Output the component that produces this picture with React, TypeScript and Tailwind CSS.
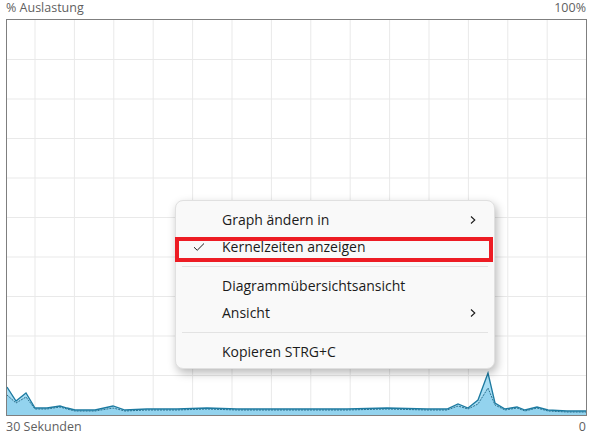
import React from "react";

const W = 579;
const H = 395;

const total: [number, number][] = [
  [0, 367], [9, 381], [19, 373], [28, 388], [40, 388], [53, 386], [60, 388], [68, 390],
  [88, 390], [106, 386], [118, 390], [140, 389], [170, 389], [200, 388], [230, 389],
  [260, 389], [300, 389], [340, 389], [380, 388], [420, 389], [440, 389], [451, 384],
  [461, 388], [471, 380], [481, 353], [488, 383], [498, 389], [510, 387], [518, 390],
  [530, 387], [541, 390], [560, 391], [579, 391],
];

const kernel: [number, number][] = [
  [0, 375], [9, 383], [19, 377], [28, 389], [40, 389], [53, 387], [60, 389], [68, 391],
  [88, 391], [106, 388], [118, 391], [140, 390], [170, 390], [200, 389], [230, 390],
  [260, 390], [300, 390], [340, 390], [380, 389], [420, 390], [440, 390], [451, 386],
  [461, 389], [471, 384], [481, 368], [488, 385], [498, 390], [510, 388], [518, 391],
  [530, 388], [541, 391], [560, 392], [579, 392],
];

const toLine = (pts: [number, number][]) => pts.map((p, i) => `${i ? "L" : "M"}${p[0]} ${p[1]}`).join(" ");
const toArea = (pts: [number, number][]) => `${toLine(pts)} L${W} ${H} L0 ${H} Z`;

function Chart() {
  const vlines: number[] = [];
  for (let x = 28; x < W; x += 39.4) vlines.push(x);
  const hlines: number[] = [];
  for (let i = 1; i < 10; i++) hlines.push(i * 39.5);
  return (
    <svg width={W} height={H} viewBox={`0 0 ${W} ${H}`} className="block">
      {vlines.map((x) => (
        <line key={`v${x}`} x1={x} y1={0} x2={x} y2={H} stroke="#e9e9e9" strokeWidth={1} />
      ))}
      {hlines.map((y) => (
        <line key={`h${y}`} x1={0} y1={y} x2={W} y2={y} stroke="#e9e9e9" strokeWidth={1} />
      ))}
      <path d={toArea(total)} fill="#a9def4" />
      <path d={toArea(kernel)} fill="#93d3ee" />
      <path d={toLine(kernel)} fill="none" stroke="#2a6f8c" strokeWidth={1} strokeDasharray="2 1" />
      <path d={toLine(total)} fill="none" stroke="#1d7aa0" strokeWidth={1.3} />
    </svg>
  );
}

function Chevron() {
  return (
    <svg width="8" height="10" viewBox="0 0 8 10" className="block">
      <path d="M2 1.5 L5.8 5 L2 8.5" fill="none" stroke="#1b1b1b" strokeWidth="1.1" />
    </svg>
  );
}

function Check() {
  return (
    <svg width="12" height="10" viewBox="0 0 12 10" className="block">
      <path d="M1 5.2 L4.2 8.3 L11 1.5" fill="none" stroke="#1b1b1b" strokeWidth="1" />
    </svg>
  );
}

function Item({ label, check, sub }: { label: string; check?: boolean; sub?: boolean }) {
  return (
    <div className="flex h-[27px] items-center">
      <div className="flex w-[46px] shrink-0 items-center pl-[17px]">{check ? <Check /> : null}</div>
      <div className="flex-1 text-[14px] leading-none text-[#1b1b1b]">{label}</div>
      <div className="w-[25px] shrink-0">{sub ? <Chevron /> : null}</div>
    </div>
  );
}

function Sep() {
  return (
    <div className="flex h-[12px] items-center px-[6px]">
      <div className="h-px w-full bg-[#e3e3e3]" />
    </div>
  );
}

export default function App() {
  return (
    <div
      className="relative h-[439px] w-[597px] overflow-hidden bg-white"
      style={{ fontFamily: '"Segoe UI", "Open Sans", "Noto Sans", sans-serif' }}
    >
      <div className="flex h-[19px] items-center justify-between pb-[2px] pl-[6px] pr-[11px] text-[12.5px] leading-none text-[#5f5f5f]">
        <span>% Auslastung</span>
        <span>100%</span>
      </div>
      <div className="ml-[6px] h-[397px] w-[581px] border border-[#7f7f7f]">
        <Chart />
      </div>
      <div className="flex h-[23px] items-center justify-between pl-[6px] pr-[11px] text-[12.5px] leading-none text-[#5f5f5f]">
        <span>30 Sekunden</span>
        <span>0</span>
      </div>

      <div className="absolute left-[175px] top-[200px] w-[320px] rounded-[8px] border border-[#e0e0e0] bg-[#f9f9f9] pb-[3px] pt-[5px] shadow-[2px_4px_10px_rgba(0,0,0,0.28)]">
        <Item label="Graph ändern in" sub />
        <Item label="Kernelzeiten anzeigen" check />
        <Sep />
        <Item label="Diagrammübersichtsansicht" />
        <Item label="Ansicht" sub />
        <Sep />
        <Item label="Kopieren STRG+C" />
      </div>
      <div className="absolute left-[175px] top-[237px] h-[25px] w-[318px] border-[4px] border-[#ed1c24]" />
    </div>
  );
}
